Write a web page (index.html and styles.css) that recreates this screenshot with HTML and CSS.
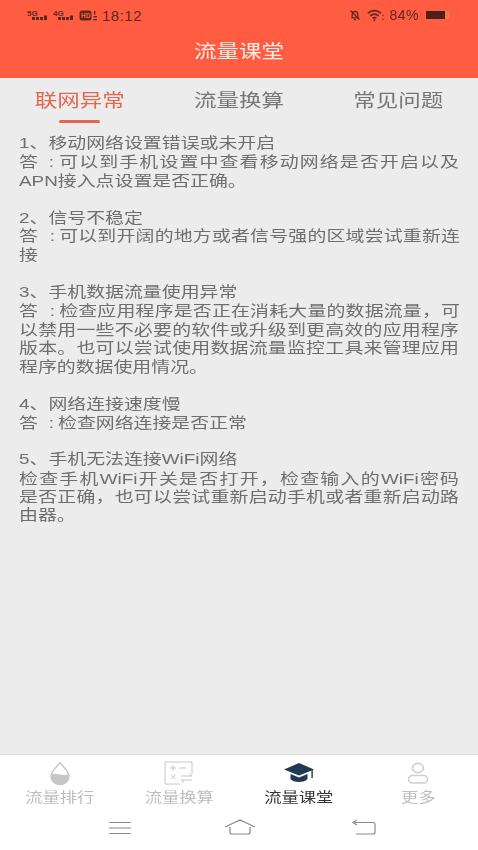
FILE: index.html
```html
<!doctype html>
<html>
  <head>
    <title>流量课堂</title>
    <link rel="stylesheet" href="styles.css">
  </head>

  <body>
    <div class="page">
      <div class="header">
        <div class="status">
          <div class="status_left">
            <svg class="signal" viewBox="0 0 22 12">
              <text x="0" y="6.5" class="signal_text">5G</text>
              <rect x="5" y="8" width="3" height="3"/>
              <rect x="9" y="8" width="3" height="3"/>
              <rect x="13" y="8" width="3" height="3"/>
              <rect x="17" y="6.5" width="3" height="4.5"/>
            </svg>
            <svg class="signal" viewBox="0 0 22 12">
              <text x="0" y="6.5" class="signal_text">4G</text>
              <rect x="5" y="8" width="3" height="3"/>
              <rect x="9" y="8" width="3" height="3"/>
              <rect x="13" y="8" width="3" height="3"/>
              <rect x="17" y="6.5" width="3" height="4.5"/>
            </svg>
            <svg class="hd" viewBox="0 0 20 11">
              <rect x="0.5" y="0.5" width="12" height="10" rx="2.5" fill="currentColor"/>
              <text x="2" y="8" class="hd_text">HD</text>
              <rect x="15" y="1" width="1.4" height="3.5" fill="currentColor"/>
              <rect x="14.5" y="6" width="3.4" height="1.4" fill="currentColor"/>
              <rect x="14.5" y="9" width="3.4" height="1.4" fill="currentColor"/>
            </svg>
            <span class="time">18:12</span>
          </div>
          <div class="status_right">
            <svg class="mute" viewBox="0 0 12 12" fill="none" stroke="currentColor" stroke-width="1.3">
              <path d="M3 8.8 L3.3 5 C3.6 1.6 8.4 1.6 8.7 5 L9 8.8 Z"/>
              <path d="M5 10.6 H7"/>
              <path d="M1.5 1.5 L10.5 10.5"/>
            </svg>
            <svg class="wifi" viewBox="0 0 16 12" fill="none" stroke="currentColor" stroke-width="1.6">
              <path d="M0.8 4 C4.5 0.6 9.5 0.6 13.2 4"/>
              <path d="M3 6.4 C5.4 4.3 8.6 4.3 11 6.4"/>
              <path d="M5.2 8.6 C6.4 7.7 7.6 7.7 8.8 8.6"/>
              <circle cx="7" cy="10.6" r="0.9" fill="currentColor" stroke="none"/>
              <circle cx="15" cy="6" r="0.7" fill="currentColor" stroke="none"/>
              <circle cx="15" cy="9.5" r="0.7" fill="currentColor" stroke="none"/>
            </svg>
            <span class="battery_text">84%</span>
            <div class="battery"><div class="battery_fill"></div></div>
          </div>
        </div>
        <div class="title"><span class="squash">流量课堂</span></div>
      </div>

      <div class="tabs">
        <div class="tab tab_on"><span class="squash">联网异常</span></div>
        <div class="tab"><span class="squash">流量换算</span></div>
        <div class="tab"><span class="squash">常见问题</span></div>
      </div>

      <div class="content">
        <div class="article">
          <p>
            <span class="line">1、移动网络设置错误或未开启</span>
            <span class="line fit"><span class="ans">答:</span>可以到手机设置中查看移动网络是否开启以及</span>
            <span class="line">APN接入点设置是否正确。</span>
          </p>
          <p>
            <span class="line">2、信号不稳定</span>
            <span class="line fit tight"><span class="ans">答:</span>可以到开阔的地方或者信号强的区域尝试重新连</span>
            <span class="line">接</span>
          </p>
          <p>
            <span class="line">3、手机数据流量使用异常</span>
            <span class="line fit tight"><span class="ans">答:</span>检查应用程序是否正在消耗大量的数据流量，可</span>
            <span class="line fit">以禁用一些不必要的软件或升级到更高效的应用程序</span>
            <span class="line fit">版本。也可以尝试使用数据流量监控工具来管理应用</span>
            <span class="line">程序的数据使用情况。</span>
          </p>
          <p>
            <span class="line">4、网络连接速度慢</span>
            <span class="line"><span class="ans">答:</span>检查网络连接是否正常</span>
          </p>
          <p>
            <span class="line">5、手机无法连接WiFi网络</span>
            <span class="line fit">检查手机WiFi开关是否打开，检查输入的WiFi密码</span>
            <span class="line fit">是否正确，也可以尝试重新启动手机或者重新启动路</span>
            <span class="line">由器。</span>
          </p>
        </div>
      </div>

      <div class="tabbar">
        <div class="nav_item">
          <svg class="nav_icon" viewBox="0 0 24 24">
            <path d="M12 1.5 C9 6 3 10 3 15.5 C3 20 7.3 23.5 12 23.5 C16.7 23.5 21 20 21 15.5 C21 10 15 6 12 1.5 Z" fill="none" stroke="#c6c6c6" stroke-width="1.4"/>
            <path d="M3.5 13.5 C8 11 14 16 20.5 13 C21.5 18.5 17 23.5 12 23.5 C7 23.5 2.7 19 3.5 13.5 Z" fill="#c6c6c6"/>
          </svg>
          <span class="squash nav_text">流量排行</span>
        </div>
        <div class="nav_item">
          <svg class="nav_icon nav_icon_wide" viewBox="0 0 30 24" fill="none" stroke="#c6c6c6" stroke-width="1">
            <path d="M28 1 H1 V23 H16"/>
            <path d="M28 1 V13"/>
            <path d="M6 7 H12 M9 4 V10 M15 7 H22"/>
            <path d="M7 13.5 L11.5 18 M11.5 13.5 L7 18"/>
            <path d="M17 15 H28 L25 12.5 M28 19 H17 L20 21.5"/>
          </svg>
          <span class="squash nav_text">流量换算</span>
        </div>
        <div class="nav_item nav_on">
          <svg class="nav_icon nav_icon_wide" viewBox="0 0 30 22">
            <path d="M15 1 L30 7.5 L15 13.5 L0 7.5 Z" fill="#1e3a54"/>
            <path d="M6.5 12 L15 15.5 L23.5 12 V17 C21 21 9 21 6.5 17 Z" fill="#1e3a54"/>
            <rect x="27.4" y="8" width="1.4" height="8" fill="#1e3a54"/>
          </svg>
          <span class="squash nav_text">流量课堂</span>
        </div>
        <div class="nav_item">
          <svg class="nav_icon" viewBox="0 0 24 24" fill="none" stroke="#cfcfcf" stroke-width="1.6">
            <ellipse cx="12" cy="7" rx="5.5" ry="4.6"/>
            <rect x="2.5" y="14.5" width="19" height="7.5" rx="3.8"/>
          </svg>
          <span class="squash nav_text">更多</span>
        </div>
      </div>

      <div class="sysnav">
        <svg class="sys_icon sys_menu" viewBox="0 0 24 14" fill="none" stroke="#8a8a8a" stroke-width="1.2">
          <path d="M1 1.5 H23 M1 7 H23 M1 12.5 H23"/>
        </svg>
        <svg class="sys_icon sys_home" viewBox="0 0 32 16" fill="none" stroke="#8a8a8a" stroke-width="1.2">
          <path d="M1 8 L16 1 L31 8"/>
          <path d="M6 8 V13 C6 15 7 15 8 15 H24 C25 15 26 15 26 13 V8"/>
        </svg>
        <svg class="sys_icon" viewBox="0 0 24 16" fill="none" stroke="#8a8a8a" stroke-width="1.2">
          <path d="M1 3.5 H21 C22 3.5 23 4 23 5 V13 C23 14 22 15 21 15 H4"/>
          <path d="M5 1 L1 3.5 L5 6"/>
        </svg>
      </div>
    </div>
  </body>
</html>
```

FILE: styles.css
```css
body {
  margin: 0;
  background-color: #ececec;
  font-family: "Liberation Sans", "Noto Sans CJK SC", sans-serif;
}

.page {
  display: flex;
  flex-direction: column;
  width: 478px;
  height: 850px;
  overflow: hidden;
  filter: blur(0.35px);
}

/* the shot is squeezed vertically, so the text is too */
.squash {
  display: block;
  transform: scaleY(0.8);
}

.header {
  height: 78px;
  background-color: #ff5c41;
  color: #5d2a20;
}

.status {
  display: flex;
  justify-content: space-between;
  align-items: center;
  height: 30px;
  padding: 0 28px 0 27px;
}

.status_left,
.status_right {
  display: flex;
  align-items: center;
}

.signal {
  width: 22px;
  height: 12px;
  margin-right: 4px;
  fill: #5d2a20;
}

.signal_text {
  font-size: 8px;
  font-weight: bold;
}

.hd {
  width: 20px;
  height: 11px;
  margin-right: 3px;
}

.hd_text {
  font-size: 6.5px;
  font-weight: bold;
  fill: #ff5c41;
}

.time {
  font-size: 15px;
  letter-spacing: 0.5px;
}

.mute {
  width: 12px;
  height: 12px;
  margin-right: 6px;
}

.wifi {
  width: 17px;
  height: 13px;
  margin-right: 5px;
}

.battery_text {
  font-size: 14px;
  letter-spacing: 0.5px;
  margin-right: 7px;
}

.battery {
  width: 24px;
  height: 8px;
  border-radius: 2px;
  background-color: #f0735c;
}

.battery_fill {
  width: 19px;
  height: 8px;
  background-color: #4c1f18;
}

.title {
  text-align: center;
  color: #fff0ea;
  font-size: 22.5px;
  line-height: 44px;
}

.tabs {
  display: flex;
  height: 46px;
}

.tab {
  position: relative;
  flex: 1;
  text-align: center;
  color: #767676;
  font-size: 22.5px;
  line-height: 46px;
}

.tab_on {
  color: #e2674f;
}

.tab_on::after {
  content: "";
  position: absolute;
  left: 59px;
  top: 42px;
  width: 41px;
  height: 3px;
  border-radius: 2px;
  background-color: #e2674f;
}

.content {
  flex: 1;
  padding: 10px 19px 0 19px;
}

.article {
  width: 440px;
  color: #6e6e6e;
  font-size: 18.9px;
  line-height: 23.25px;
  transform: scaleY(0.8);
  transform-origin: top left;
}

.article p {
  margin: 0 0 23.25px 0;
}

.line {
  display: block;
  white-space: nowrap;
}

/* full lines run edge to edge in the app */
.fit {
  white-space: normal;
  text-align-last: justify;
}

.tight {
  letter-spacing: -0.95px;
}

.ans {
  display: inline-block;
  width: 35px;
  padding-right: 4px;
  text-align-last: justify;
}

.tabbar {
  display: flex;
  height: 60px;
  border-top: 1px solid #dcdcdc;
  background-color: #ffffff;
}

.nav_item {
  flex: 1;
  display: flex;
  flex-direction: column;
  align-items: center;
  padding-top: 6px;
  color: #bdbdbd;
}

.nav_on {
  color: #333333;
}

.nav_icon {
  width: 24px;
  height: 24px;
}

.nav_icon_wide {
  width: 30px;
}

.nav_text {
  font-size: 17.3px;
  line-height: 22px;
  margin-top: 1px;
}

.sysnav {
  display: flex;
  justify-content: space-between;
  align-items: center;
  height: 35px;
  padding: 0 102px 12px 108px;
  box-sizing: border-box;
  background-color: #ffffff;
}

.sys_icon {
  width: 24px;
  height: 16px;
}

.sys_menu {
  margin-top: 2px;
}

.sys_home {
  width: 32px;
  margin-right: 5px;
}
```
